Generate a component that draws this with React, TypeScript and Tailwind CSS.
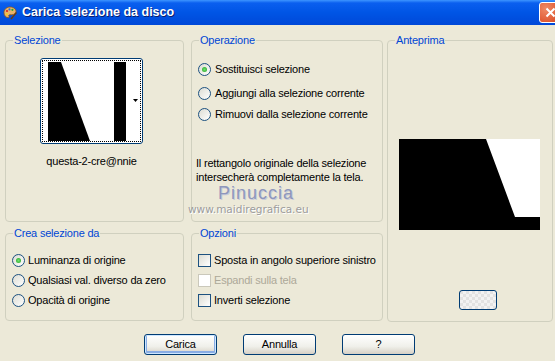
import type { ReactNode } from 'react';

const GroupBox = ({ title, className, children }: { title: string; className?: string; children?: ReactNode }) => (
  <div className={`relative rounded-[4px] border border-[#D0D0BF] ${className ?? ''}`}>
    <span className="absolute left-[7px] top-[-8px] bg-[#ECE9D8] px-[1px] leading-[14px] text-[#0046D5]">{title}</span>
    {children}
  </div>
);

const Radio = ({ checked }: { checked?: boolean }) => (
  <span className="flex h-[13px] w-[13px] shrink-0 items-center justify-center rounded-full border border-[#1C5180] bg-[linear-gradient(135deg,#DCDCD3,#FFFFFF)]">
    {checked && <span className="h-[5px] w-[5px] rounded-full bg-[radial-gradient(circle,#6FE26F,#21A121)]" />}
  </span>
);

const Check = ({ disabled }: { disabled?: boolean }) => (
  <span
    className={`h-[13px] w-[13px] shrink-0 border ${
      disabled ? 'border-[#CAC8BB] bg-white' : 'border-[#1C5180] bg-[linear-gradient(135deg,#DCDCD3,#FFFFFF)]'
    }`}
  />
);

const XpButton = ({ label, focused }: { label: string; focused?: boolean }) => (
  <button
    className={`h-[21px] w-[73px] rounded-[3px] border border-[#003C74] bg-[linear-gradient(#FFFFFF,#F0F0EA_60%,#D6D0C5)] leading-none text-black ${
      focused ? 'shadow-[inset_0_0_0_1px_#CEE7FF,inset_0_-1px_0_2px_#89ADE4]' : ''
    }`}
  >
    {label}
  </button>
);

const PaletteIcon = () => (
  <svg width="14" height="14" viewBox="0 0 14 14">
    <path d="M7 1C3.5 1 1 3.5 1 6.8c0 2.6 1.8 4.8 4.3 4.8.9 0 1-.8.6-1.4-.4-.6 0-1.4.8-1.4h1.8C11 8.8 13 7.4 13 5.4 13 3 10.3 1 7 1z" fill="#E9B46A" stroke="#8A5418" strokeWidth="0.8" />
    <circle cx="4" cy="5" r="1.1" fill="#D7261E" />
    <circle cx="6.5" cy="3.4" r="1.1" fill="#2A6BE0" />
    <circle cx="9.4" cy="3.8" r="1.1" fill="#2AA52A" />
    <circle cx="3.8" cy="8.2" r="1" fill="#F2D21A" />
    <path d="M13.5 6.5 8 13" stroke="#6B3A12" strokeWidth="1.4" />
  </svg>
);

const App = () => {
  return (
    <div className="relative h-[361px] w-[555px] overflow-hidden bg-[#ECE9D8] font-['Liberation_Sans',Arial,sans-serif] text-[11px] tracking-[-0.2px] text-black">
      {/* title bar */}
      <div className="flex h-[25px] items-center bg-[linear-gradient(#3D95FF,#0A5FEF_3px,#0055E5_50%,#0048D8)] pl-[3px]">
        <PaletteIcon />
        <span className="ml-[5px] text-[12.5px] font-bold tracking-normal text-white [text-shadow:1px_1px_#0A1E6E]">
          Carica selezione da disco
        </span>
        <div className="ml-auto mr-[-6px] flex h-[21px] w-[22px] items-center justify-center rounded-[3px] border border-white bg-[radial-gradient(circle_at_30%_30%,#F08B66,#D8431C)]">
          <svg width="11" height="11" viewBox="0 0 11 11">
            <path d="M1.5 1.5 9.5 9.5M9.5 1.5 1.5 9.5" stroke="white" strokeWidth="2" />
          </svg>
        </div>
      </div>

      {/* groups */}
      <div className="flex pl-[5px] pt-[15px]">
        <div className="flex w-[179px] flex-col gap-[11px]">
          <GroupBox title="Selezione" className="h-[182px]">
            <div className="pl-[34px] pt-[17px]">
              <div className="relative h-[86px] w-[103px] rounded-[3px] border border-[#003C74] bg-white pl-[7px] pt-[3px]">
                <svg width="91" height="79" viewBox="0 0 91 79" className="block">
                  <rect width="91" height="79" fill="#fff" />
                  <polygon points="0,0 13,0 42,79 0,79" fill="#000" />
                  <rect x="66" y="0" width="12" height="79" fill="#000" />
                  <polygon points="85,37 90,37 87.5,40" fill="#000" />
                </svg>
                <span className="absolute inset-[1px] border border-dotted border-black" />
              </div>
              <div className="mt-[11px] w-[103px] text-center leading-[13px]">questa-2-cre@nnie</div>
            </div>
          </GroupBox>
          <GroupBox title="Crea selezione da" className="h-[88px]">
            <div className="flex flex-col pl-[6px] pt-[16px]">
              {['Luminanza di origine', 'Qualsiasi val. diverso da zero', 'Opacità di origine'].map((t, i) => (
                <label key={t} className="flex h-[20px] items-center gap-[3px] whitespace-nowrap">
                  <Radio checked={i === 0} />
                  {t}
                </label>
              ))}
            </div>
          </GroupBox>
        </div>

        <div className="ml-[7px] flex w-[192px] flex-col gap-[11px]">
          <GroupBox title="Operazione" className="h-[182px]">
            <div className="flex flex-col pl-[6px] pt-[20px]">
              <label className="flex h-[16px] items-center gap-[4px] whitespace-nowrap">
                <Radio checked />
                Sostituisci selezione
              </label>
              <label className="mt-[8px] flex h-[16px] items-center gap-[4px] whitespace-nowrap">
                <Radio />
                Aggiungi alla selezione corrente
              </label>
              <label className="mt-[5px] flex h-[16px] items-center gap-[4px] whitespace-nowrap">
                <Radio />
                Rimuovi dalla selezione corrente
              </label>
            </div>
            <p className="mt-[34px] whitespace-nowrap pl-[4px] leading-[14px]">
              Il rettangolo originale della selezione
              <br />
              intersecherà completamente la tela.
            </p>
          </GroupBox>
          <GroupBox title="Opzioni" className="h-[88px]">
            <div className="flex flex-col pl-[6px] pt-[16px]">
              <label className="flex h-[20px] items-center gap-[3px] whitespace-nowrap">
                <Check />
                Sposta in angolo superiore sinistro
              </label>
              <label className="flex h-[20px] items-center gap-[3px] whitespace-nowrap text-[#ACA899]">
                <Check disabled />
                Espandi sulla tela
              </label>
              <label className="flex h-[20px] items-center gap-[3px] whitespace-nowrap">
                <Check />
                Inverti selezione
              </label>
            </div>
          </GroupBox>
        </div>

        <GroupBox title="Anteprima" className="ml-[4px] h-[282px] w-[166px]">
          <div className="pl-[11px] pt-[98px]">
            <svg width="141" height="91" viewBox="0 0 141 91" className="block">
              <rect width="141" height="91" fill="#fff" />
              <polygon points="0,0 87,0 116,78 141,78 141,91 0,91" fill="#000" />
            </svg>
          </div>
          <div className="pl-[71px] pt-[60px]">
            <div className="h-[20px] w-[38px] rounded-[3px] border border-[#003C74] bg-[repeating-conic-gradient(#F2F2F2_0_25%,#E2E2E2_0_50%)] bg-[length:6px_6px]" />
          </div>
        </GroupBox>
      </div>

      {/* buttons */}
      <div className="mt-[12px] flex gap-[26px] pl-[144px]">
        <XpButton label="Carica" focused />
        <XpButton label="Annulla" />
        <XpButton label="?" />
      </div>

      {/* watermark overlay */}
      <div className="pointer-events-none absolute left-[218px] top-[185px] text-[18px] leading-[16px] tracking-[1px] text-[#8E97BC] [text-shadow:1px_1px_#C9CCD8]">
        Pinuccia
      </div>
      <div className="pointer-events-none absolute left-[188px] top-[203px] font-['DejaVu_Sans',sans-serif] text-[10.5px] leading-[12px] tracking-normal text-[#9C9C9C] [text-shadow:1px_1px_#FFFFFF]">
        www.maidiregrafica.eu
      </div>
    </div>
  );
};

export default App;
